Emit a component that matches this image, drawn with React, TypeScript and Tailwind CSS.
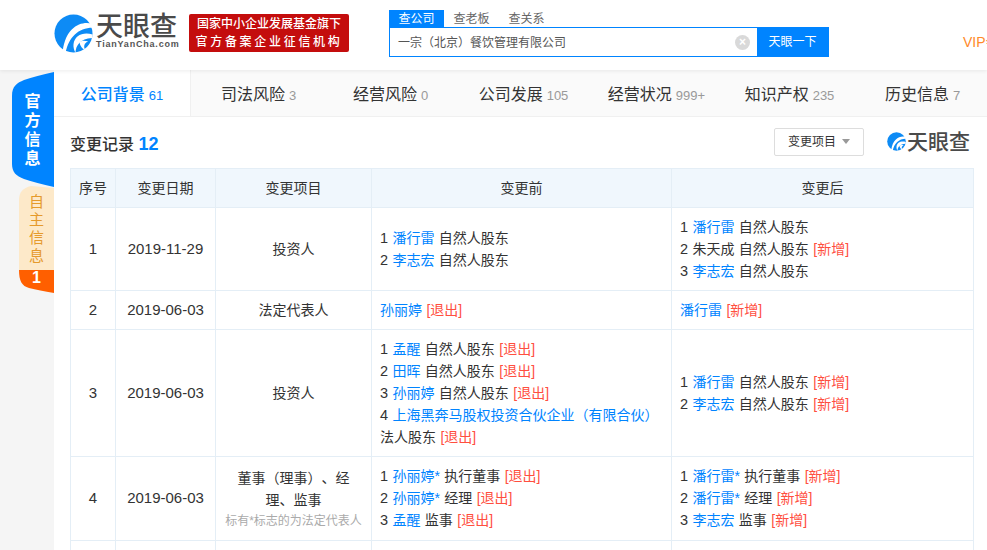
import type { ReactNode } from "react"

const font = "font-['Liberation_Sans','Noto_Sans_CJK_SC',sans-serif]"

const Logo = ({ size }: { size: number }) => (
  <svg width={size} height={size} viewBox="0 0 40 40" className="shrink-0">
    <circle cx="20" cy="20" r="19.5" fill="#0d8bf5" />
    <path d="M39 10C27 7 12 14 9 38 10 38.500 11 39 12 39.300 15 24 25 14 39.500 14Z" fill="#fff" />
    <path d="M39.500 21C30 18 21 22 20 31 19.700 34 20.500 37 22 39.500 22.500 32 27 25 39 24.500Z" fill="#fff" />
    <path d="M26 29C27 33 29 36 32 37 30 33 31 30 35 28 31 27 28 27 26 29Z" fill="#fff" />
  </svg>
)

const Link = ({ children }: { children: ReactNode }) => <span className="text-[#0084ff]">{children}</span>
const Out = () => <span className="text-[#ff4f3f]">[退出]</span>
const New = () => <span className="text-[#ff4f3f]">[新增]</span>
const Num = ({ children }: { children: ReactNode }) => <span className="text-[14.500px]">{children}</span>

const tabs = [
  { name: "公司背景", n: "61", w: "w-[137px]", active: true },
  { name: "司法风险", n: "3", w: "w-[135px]" },
  { name: "经营风险", n: "0", w: "w-[129px]" },
  { name: "公司发展", n: "105", w: "w-[137px]" },
  { name: "经营状况", n: "999+", w: "w-[129px]" },
  { name: "知识产权", n: "235", w: "w-[137px]" },
  { name: "历史信息", n: "7", w: "w-[129px]" },
]

const cell = "border border-[#e4eef6] align-middle"

const Row = ({ no, date, item, before, after, h }: { no: string; date: string; item: ReactNode; before: ReactNode; after: ReactNode; h: string }) => (
  <tr className={h}>
    <td className={`${cell} text-center text-[15px]`}>{no}</td>
    <td className={`${cell} text-center text-[15px]`}>{date}</td>
    <td className={`${cell} text-center`}>{item}</td>
    <td className={`${cell} px-2 leading-[22px]`}>{before}</td>
    <td className={`${cell} px-2 leading-[22px]`}>{after}</td>
  </tr>
)

const Side = () => (
  <div className="w-[54px] shrink-0 bg-[#f5f5f5] flex flex-col items-end pt-[2px]">
    <div className="relative w-[42px] h-[115px] flex flex-col items-center justify-center text-white font-bold text-[16px] leading-[19px]">
      <svg width="42" height="115" viewBox="0 0 42 115" className="absolute inset-0">
        <path d="M42 0V115C30 112 20 110 12 107 4 104 0 100 0 92V24C0 14 5 11 12 8 20 5 30 3 42 0Z" fill="#0084ff" />
      </svg>
      <span className="relative pr-[1px]">官</span>
      <span className="relative pr-[1px]">方</span>
      <span className="relative pr-[1px]">信</span>
      <span className="relative pr-[1px]">息</span>
    </div>
    <div className="relative w-[35px] h-[109px] -mt-[1px] flex flex-col items-center text-[#e59a2c] text-[15px] leading-[18px] pt-[7px]">
      <svg width="35" height="109" viewBox="0 0 35 109" className="absolute inset-0">
        <path d="M35 2V84H0V14C0 6 4 2 12 0Z" fill="#fde9c9" />
        <path d="M0 84H35V107C25 105 17 104 10 102 3 100 0 95 0 84Z" fill="#ff5f00" />
      </svg>
      <span className="relative">自</span>
      <span className="relative">主</span>
      <span className="relative">信</span>
      <span className="relative">息</span>
      <span className="relative text-white font-bold text-[16px] mt-[4px]">1</span>
    </div>
  </div>
)

export default function App() {
  return (
    <div className={`w-[987px] h-[550px] overflow-hidden bg-[#f5f5f5] text-[#333] text-[14px] [text-spacing-trim:space-all] ${font}`}>
      <header className="relative z-10 h-[70px] bg-white shadow-[0_1px_4px_rgba(0,0,0,0.08)] flex pl-[54px] overflow-hidden">
        <div className="flex items-center gap-[3px] w-[135px] h-[66px] shrink-0">
          <Logo size={39} />
          <div className="flex flex-col pb-[2px]">
            <span className="text-[27px] leading-[24px] font-medium text-[#4a4a4a] whitespace-nowrap">天眼查</span>
            <span className="text-[9px] leading-[10px] font-bold tracking-[0.8px] text-[#555] whitespace-nowrap">TianYanCha.com</span>
          </div>
        </div>
        <div className="mt-[14px] w-[160px] h-[38px] shrink-0 rounded-[2px] bg-[#c40d0d] text-white font-medium text-center text-[12px] leading-[18px] pt-[1px]">
          <div>国家中小企业发展基金旗下</div>
          <div className="tracking-[2.7px]">官方备案企业征信机构</div>
        </div>
        <div className="ml-[40px] mt-[10px] w-[440px] shrink-0">
          <div className="flex h-[17px] text-[12px] leading-[18px] text-[#666]">
            <span className="w-[55px] bg-[#0084ff] text-white text-center">查公司</span>
            <span className="w-[55px] text-center">查老板</span>
            <span className="w-[55px] text-center">查关系</span>
          </div>
          <div className="flex h-[30px] border border-[#0084ff]">
            <div className="flex-1 flex items-center pl-[8px] pr-[7px] text-[12px] text-[#555] bg-white">
              <span className="flex-1 pt-[2px]">一宗（北京）餐饮管理有限公司</span>
              <span className="w-[15px] h-[15px] rounded-full bg-[#d9d9d9] text-white flex items-center justify-center text-[12px] leading-none font-bold">×</span>
            </div>
            <div className="w-[71px] bg-[#0084ff] text-white text-[12px] flex items-center justify-center">天眼一下</div>
          </div>
        </div>
        <span className="ml-[134px] mt-[32px] text-[14px] leading-[20px] text-[#ff8a2a] whitespace-nowrap shrink-0">VIP会员</span>
      </header>
      <div className="flex h-[480px]">
        <Side />
        <main className="flex-1 bg-white overflow-hidden">
          <nav className="flex h-[47px] bg-[#fafafa] border-b border-[#f0f0f0]">
            {tabs.map((t) => (
              <div key={t.name} className={`${t.w} shrink-0 flex items-baseline justify-center pt-[12px] whitespace-nowrap text-[16px] leading-[26px] ${t.active ? "bg-white text-[#0084ff] font-medium border-r border-[#f0f0f0]" : "text-[#333]"}`}>
                {t.name}
                <span className={`ml-[4px] text-[13px] font-normal ${t.active ? "text-[#0084ff]" : "text-[#999]"}`}>{t.n}</span>
              </div>
            ))}
          </nav>
          <div className="flex items-center px-[16px] h-[51px] pb-[2px]">
            <h2 className="mt-[6px] text-[16px] font-medium text-[#333] flex-1">变更记录 <span className="text-[#0084ff] font-bold text-[18px]">12</span></h2>
            <button className="w-[90px] h-[28px] mr-[23px] border border-[#ddd] rounded-[2px] bg-white text-[12px] flex items-center justify-center gap-[6px]">
              变更项目
              <span className="w-0 h-0 border-x-[4px] border-x-transparent border-t-[5px] border-t-[#999]" />
            </button>
            <div className="flex items-center gap-[1px] w-[84px]">
              <Logo size={19} />
              <span className="text-[21px] leading-[20px] font-medium text-[#4a4a4a] whitespace-nowrap">天眼查</span>
            </div>
          </div>
          <table className="ml-[16px] w-[903px] table-fixed border-collapse text-[14px] [word-spacing:0.5px]">
            <colgroup>
              <col className="w-[45px]" />
              <col className="w-[100px]" />
              <col className="w-[156px]" />
              <col className="w-[300px]" />
              <col className="w-[302px]" />
            </colgroup>
            <thead>
              <tr className="h-[39px] bg-[#f0f7fd] text-[14px]">
                <th className={`${cell} font-normal`}>序号</th>
                <th className={`${cell} font-normal`}>变更日期</th>
                <th className={`${cell} font-normal`}>变更项目</th>
                <th className={`${cell} font-normal`}>变更前</th>
                <th className={`${cell} font-normal`}>变更后</th>
              </tr>
            </thead>
            <tbody>
              <Row h="h-[83px]" no="1" date="2019-11-29" item="投资人"
                before={<><div><Num>1</Num> <Link>潘行雷</Link> 自然人股东</div><div><Num>2</Num> <Link>李志宏</Link> 自然人股东</div></>}
                after={<><div><Num>1</Num> <Link>潘行雷</Link> 自然人股东</div><div><Num>2</Num> 朱天成 自然人股东 <New /></div><div><Num>3</Num> <Link>李志宏</Link> 自然人股东</div></>} />
              <Row h="h-[39px]" no="2" date="2019-06-03" item="法定代表人"
                before={<div><Link>孙丽婷</Link> <Out /></div>}
                after={<div><Link>潘行雷</Link> <New /></div>} />
              <Row h="h-[127px]" no="3" date="2019-06-03" item="投资人"
                before={<><div><Num>1</Num> <Link>孟醒</Link> 自然人股东 <Out /></div><div><Num>2</Num> <Link>田晖</Link> 自然人股东 <Out /></div><div><Num>3</Num> <Link>孙丽婷</Link> 自然人股东 <Out /></div><div><Num>4</Num> <Link>上海黑奔马股权投资合伙企业（有限合伙）</Link></div><div>法人股东 <Out /></div></>}
                after={<><div><Num>1</Num> <Link>潘行雷</Link> 自然人股东 <New /></div><div><Num>2</Num> <Link>李志宏</Link> 自然人股东 <New /></div></>} />
              <Row h="h-[84px]" no="4" date="2019-06-03"
                item={<><div className="leading-[22px] px-[20px]">董事（理事）、经理、监事</div><div className="text-[12px] leading-[20px] text-[#aaa] whitespace-nowrap">标有*标志的为法定代表人</div></>}
                before={<div className="pb-[2px]"><div><Num>1</Num> <Link>孙丽婷*</Link> 执行董事 <Out /></div><div><Num>2</Num> <Link>孙丽婷*</Link> 经理 <Out /></div><div><Num>3</Num> <Link>孟醒</Link> 监事 <Out /></div></div>}
                after={<div className="pb-[2px]"><div><Num>1</Num> <Link>潘行雷*</Link> 执行董事 <New /></div><div><Num>2</Num> <Link>潘行雷*</Link> 经理 <New /></div><div><Num>3</Num> <Link>李志宏</Link> 监事 <New /></div></div>} />
              <tr className="h-[40px]">
                <td className={cell}></td><td className={cell}></td><td className={cell}></td><td className={cell}></td><td className={cell}></td>
              </tr>
            </tbody>
          </table>
        </main>
      </div>
    </div>
  )
}
